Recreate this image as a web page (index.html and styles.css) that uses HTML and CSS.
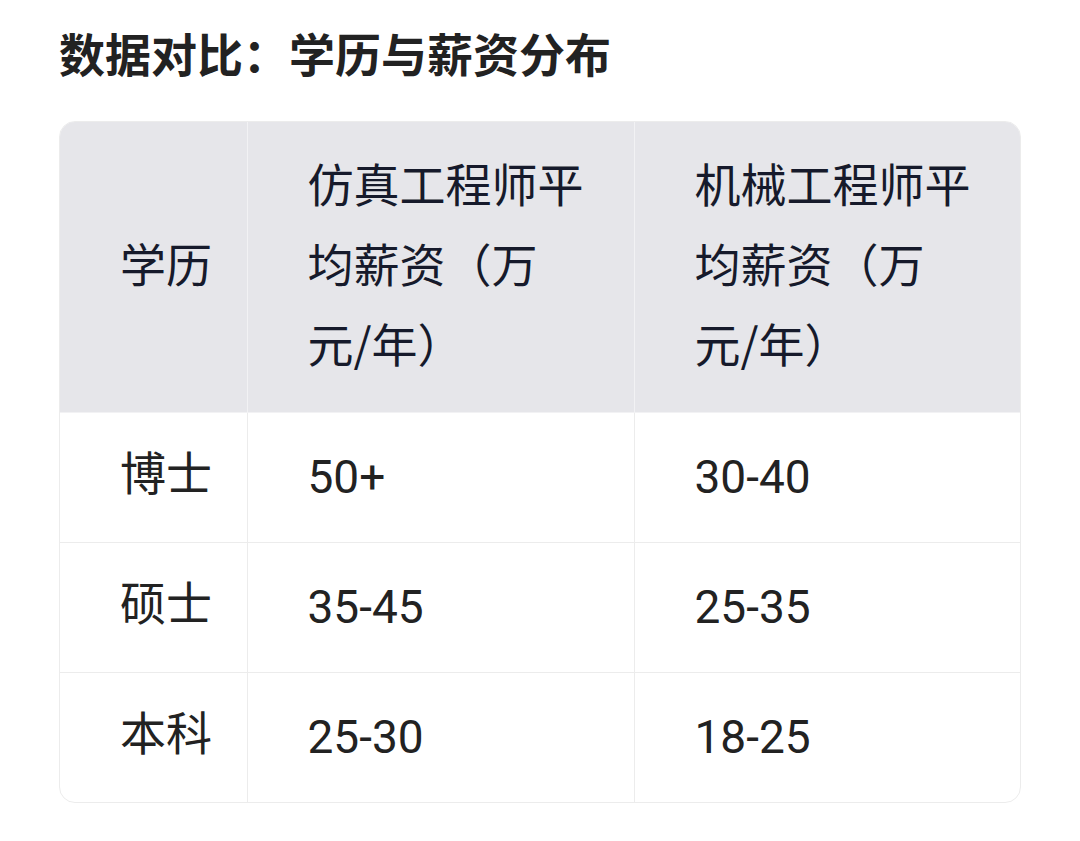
FILE: index.html
```html
<!DOCTYPE html>
<html lang="zh">
<head>
<meta charset="utf-8">
<link rel="stylesheet" href="styles.css">
</head>
<body>
<div class="page">
  <h2 class="title">数据对比：学历与薪资分布</h2>
  <div class="table-wrap">
    <table class="data">
      <colgroup>
        <col class="c1"><col class="c2"><col class="c3">
      </colgroup>
      <thead>
        <tr><th>学历</th><th>仿真工程师平均薪资（万元/年）</th><th>机械工程师平均薪资（万元/年）</th></tr>
      </thead>
      <tbody>
        <tr><td>博士</td><td>50+</td><td>30-40</td></tr>
        <tr><td>硕士</td><td>35-45</td><td>25-35</td></tr>
        <tr><td>本科</td><td>25-30</td><td>18-25</td></tr>
      </tbody>
    </table>
  </div>
</div>
</body>
</html>
```
FILE: styles.css
```css
html, body { margin: 0; padding: 0; background: #fff; }
body { font-family: Roboto, "Noto Sans CJK SC", sans-serif; color: #222; }
.page { padding: 22px 59px 0 59px; }
.title {
  margin: 0;
  font-size: 46px;
  line-height: 60px;
  font-weight: 700;
  color: #222;
  font-family: "Noto Sans CJK SC", sans-serif;
}
.table-wrap {
  margin-top: 39px;
  width: 962px;
  border: 1px solid #ececec;
  border-radius: 16px;
  overflow: hidden;
  box-sizing: border-box;
}
.data {
  width: 100%;
  border-collapse: collapse;
  table-layout: fixed;
  font-size: 46px;
  line-height: 80px;
}
.c1 { width: 187px; }
.c2 { width: 387px; }
.c3 { width: 386px; }
.data th, .data td {
  padding: 24px 45px 25px 60px;
  text-align: left;
  vertical-align: middle;
  border-right: 1px solid #ececec;
  border-bottom: 1px solid #ececec;
  white-space: normal;
}
.data th { padding-top: 20px; padding-bottom: 30px; }
.data th:first-child, .data td:first-child { padding-right: 10px; white-space: nowrap; }
.data th:last-child, .data td:last-child { border-right: none; }
.data tbody tr:last-child td { border-bottom: none; }
.data th {
  background: #e6e6ea;
  font-weight: 400;
  color: #161a2b;
  font-family: "Noto Sans CJK SC", sans-serif;
  border-color: #f2f2f4;
}
.data td { color: #222; height: 80px; }
.data td:first-child { padding-top: 21px; padding-bottom: 28px; }
```
